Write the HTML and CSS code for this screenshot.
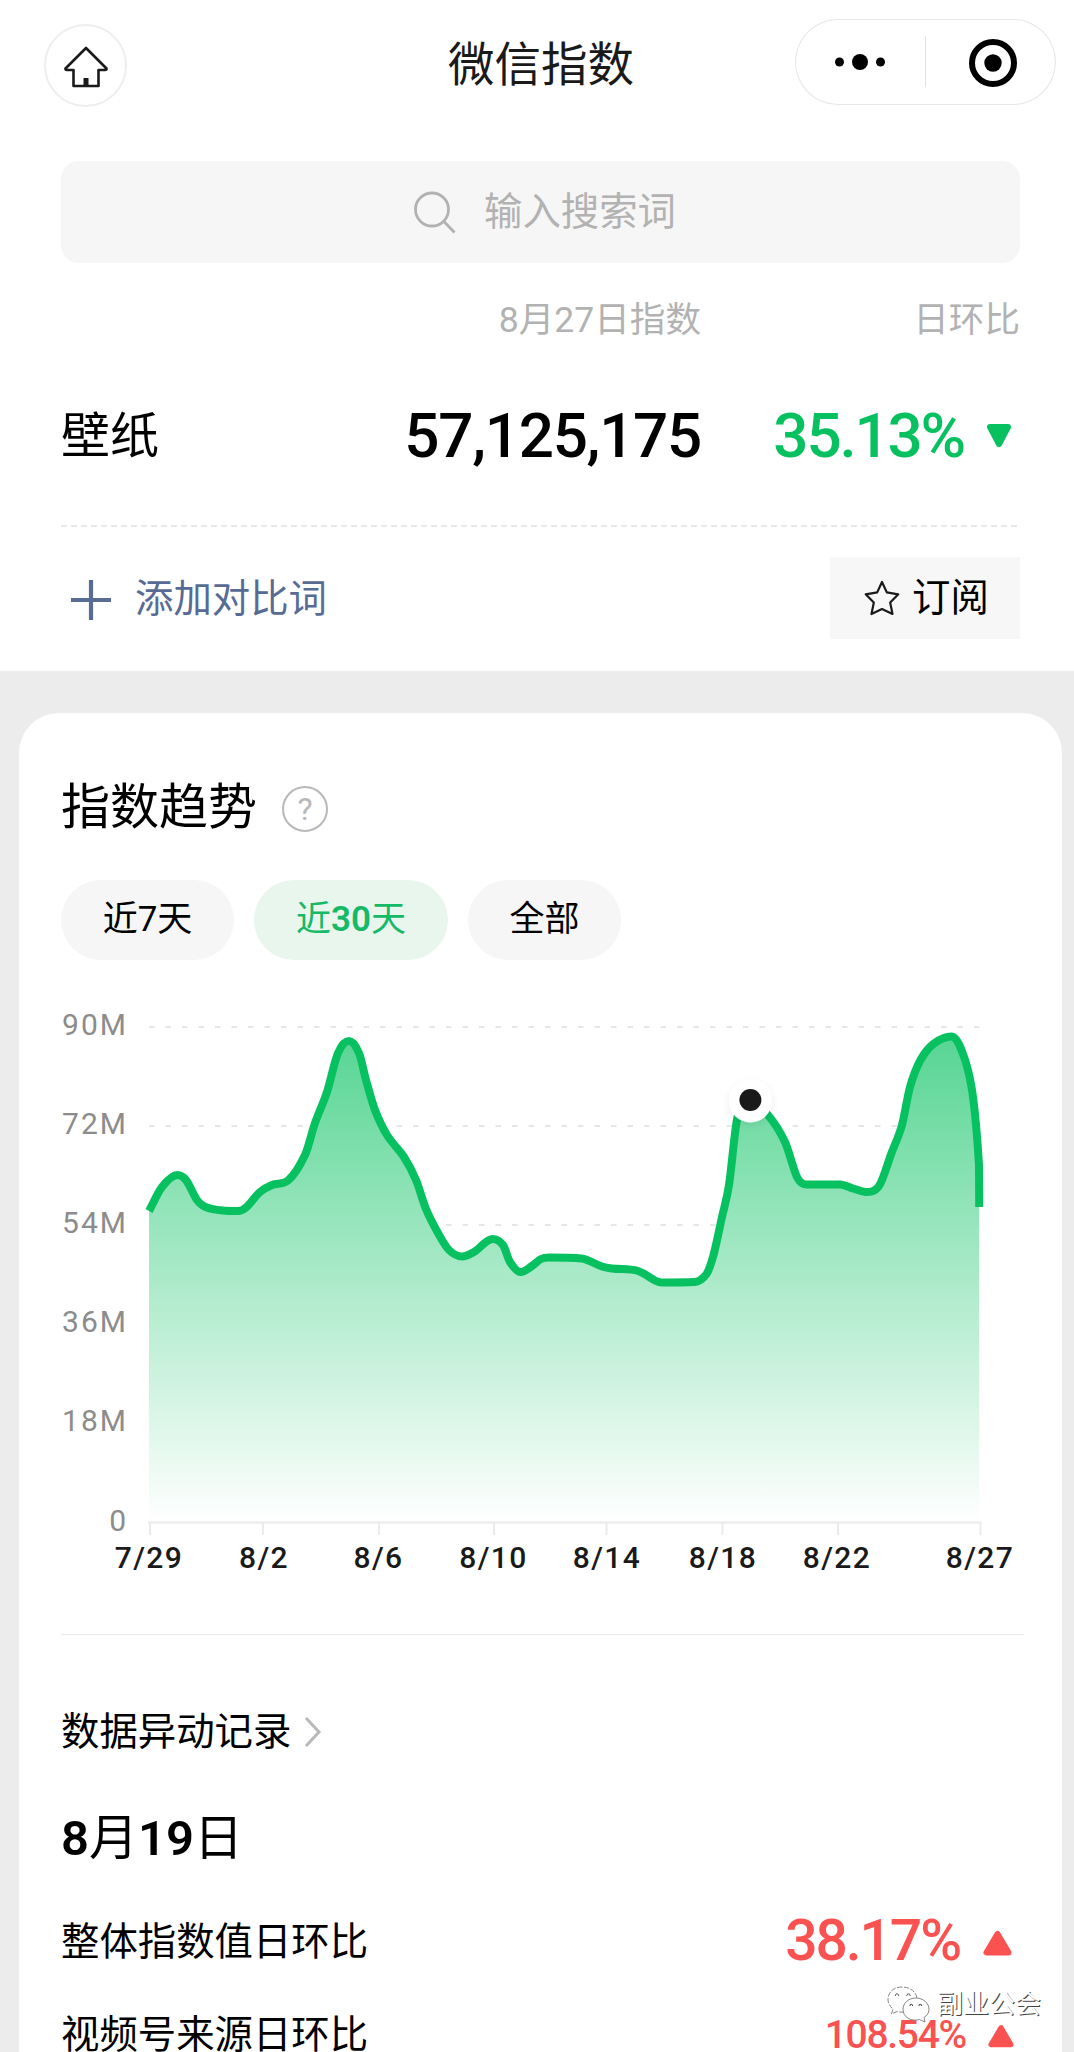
FILE: index.html
```html
<!DOCTYPE html>
<html lang="zh-CN">
<head>
  <meta charset="UTF-8">
  <title>微信指数</title>
  <meta name="viewport" content="width=device-width, initial-scale=1">
  <link rel="stylesheet" href="styles.css">
</head>
<body>

<header class="nav">
  <div class="home">
    <svg width="46" height="42" viewBox="0 0 46 42" fill="none" stroke="#1a1a1a" stroke-width="2.6" stroke-linejoin="round">
      <path d="M23 2 L2.5 22.5 Q2 24 4 24 H10.5 V40 H35.5 V24 H42 Q44 24 43.5 22.5 Z"/>
      <path d="M23 40 V32" stroke-width="5"/>
    </svg>
  </div>
  <h1>微信指数</h1>
  <div class="capsule">
    <svg width="261" height="86" viewBox="0 0 261 86">
      <circle cx="44.5" cy="43" r="4.5"/>
      <circle cx="65" cy="43" r="8"/>
      <circle cx="85.5" cy="43" r="4.5"/>
      <path d="M130.5 17 V68" stroke="#e2e2e2"/>
      <circle cx="198" cy="44" r="21" fill="none" stroke="#000" stroke-width="6"/>
      <circle cx="198" cy="44" r="8.7"/>
    </svg>
  </div>
</header>

<main>
  <section class="summary">
    <div class="search">
      <svg width="44" height="44" viewBox="0 0 44 44" fill="none" stroke="#b2b2b2" stroke-width="2.8">
        <circle cx="19" cy="19.5" r="16.5"/>
        <path d="M30.5 31 L41.5 42.5"/>
      </svg>
      <span>输入搜索词</span>
    </div>

    <div class="labels">
      <span class="col-index">8月27日指数</span>
      <span class="col-rate">日环比</span>
    </div>
    <div class="values">
      <span class="word">壁纸</span>
      <span class="col-index number">57,125,175</span>
      <span class="col-rate rate-down">
        <span class="percent">35.13%</span>
        <svg width="26" height="24" viewBox="0 0 26 24"><path d="M4 3 H22 L13 20 Z" fill="#07c160" stroke="#07c160" stroke-width="6" stroke-linejoin="round"/></svg>
      </span>
    </div>

    <svg class="dash" width="960" height="2"><path d="M0 1 H960" stroke="#e8e8e8" stroke-width="2" stroke-dasharray="6 4"/></svg>

    <div class="actions">
      <div class="add">
        <svg width="40" height="40" viewBox="0 0 40 40" stroke="#576b95" stroke-width="4.2"><path d="M20 0 V40 M0 20 H40"/></svg>
        <span>添加对比词</span>
      </div>
      <div class="subscribe">
        <svg width="36" height="36" viewBox="0 0 36 36" fill="none" stroke="#1a1a1a" stroke-width="2.2" stroke-linejoin="round">
          <path d="M18 2 L22.8 12.4 L34.3 14.3 L26.2 22.6 L28.5 34 L18 29 L7.5 34 L9.8 22.6 L1.7 14.3 L13.2 12.4 Z"/>
        </svg>
        <span>订阅</span>
      </div>
    </div>
  </section>

  <section class="card">
    <div class="card-title">
      <h2>指数趋势</h2>
      <span class="help">?</span>
    </div>

    <div class="tabs">
      <span class="tab tab-7">近7天</span>
      <span class="tab tab-30 active">近<b>30</b>天</span>
      <span class="tab tab-all">全部</span>
    </div>

    <svg class="chart" width="1043" height="674" viewBox="19 960 1043 674">
      <defs>
        <linearGradient id="area" gradientUnits="userSpaceOnUse" x1="0" y1="1035" x2="0" y2="1522">
          <stop offset="0" stop-color="#07c160" stop-opacity="0.68"/>
          <stop offset="1" stop-color="#07c160" stop-opacity="0"/>
        </linearGradient>
        <filter id="dotShadow" x="-50%" y="-50%" width="200%" height="200%">
          <feDropShadow dx="0" dy="3" stdDeviation="4" flood-opacity="0.07"/>
        </filter>
      </defs>
      <g class="grid">
        <path d="M149 1027 H980"/>
        <path d="M149 1126 H980"/>
        <path d="M149 1225 H980"/>
      </g>
      <g class="y-label">
        <text x="128" y="1035">90M</text>
        <text x="128" y="1134">72M</text>
        <text x="128" y="1233">54M</text>
        <text x="128" y="1332">36M</text>
        <text x="128" y="1431">18M</text>
        <text x="128" y="1530.5">0</text>
      </g>
      <path id="areaPath" fill="#fff"/>
      <path id="fillPath" fill="url(#area)"/>
      <path class="axis" d="M148 1522.5 H981 M150 1522 V1535 M263 1522 V1535 M379 1522 V1535 M494 1522 V1535 M606.5 1522 V1535 M722.5 1522 V1535 M838 1522 V1535 M980.5 1522 V1535"/>
      <path id="linePath" fill="none" stroke="#07c160" stroke-width="8"/>
      <circle cx="750.4" cy="1101" r="21.5" fill="#fff" filter="url(#dotShadow)"/>
      <circle cx="750.4" cy="1100" r="11" fill="#1a1a1a"/>
      <g class="x-label">
        <text x="149" y="1568">7/29</text>
        <text x="264" y="1568">8/2</text>
        <text x="378.5" y="1568">8/6</text>
        <text x="493.5" y="1568">8/10</text>
        <text x="607" y="1568">8/14</text>
        <text x="723" y="1568">8/18</text>
        <text x="837" y="1568">8/22</text>
        <text x="980" y="1568">8/27</text>
      </g>
    </svg>

    <div class="records">
      <div class="records-link">
        <span>数据异动记录</span>
        <svg width="18" height="32" viewBox="0 0 18 32" fill="none" stroke="#b8b8b8" stroke-width="3"><path d="M2 2 L15 16 L2 30"/></svg>
      </div>
      <h3><b>8</b>月<b>19</b>日</h3>
      <div class="record">
        <span>整体指数值日环比</span>
        <span class="rate-up large">
          <span class="percent">38.17%</span>
          <svg width="29" height="26" viewBox="0 0 29 26"><path d="M3.5 22.5 H25.5 L14.5 4 Z"/></svg>
        </span>
      </div>
      <div class="record">
        <span>视频号来源日环比</span>
        <span class="rate-up small">
          <span class="percent">108.54%</span>
          <svg width="26" height="24" viewBox="0 0 29 26"><path d="M3.5 22.5 H25.5 L14.5 4 Z"/></svg>
        </span>
      </div>
    </div>
  </section>
</main>

<div class="watermark">
  <svg width="43" height="37" viewBox="0 0 43 37" fill="#fff" stroke="#777" stroke-width="0.9">
    <path d="M15 1 C7 1 1 6 1 13.5 C1 18 3.5 21 6 23 L4.5 28 L10 25.5 C19 28 30 23 30 13.5 C30 6 23 1 15 1 Z" stroke-dasharray="5 1.5"/>
    <path d="M29 12 C21.5 12 16 17 16 23.5 C16 31 24 36 32.5 33.5 L38 36 L37 31.5 C40 29.5 42 27 42 23.5 C42 17 36 12 29 12 Z"/>
    <path d="M8.5 10 a1.6 1.6 0 1 1 3 0 M20 10 a1.6 1.6 0 1 1 3 0 M23 20 a1.3 1.3 0 1 1 2.5 0 M32 20 a1.3 1.3 0 1 1 2.5 0" stroke="#333"/>
  </svg>
  <span>副业公会</span>
</div>

<script>
  const points = [
    [149,1211],[162,1187],[177.4,1175],[186,1180],[197,1200],[205.5,1207],[222.6,1210.5],[238,1211],[246,1207.5],
    [260,1192],[272,1185],[288,1180.5],[305,1155],[315,1123],[327,1092],[338,1053],[349,1041],[359,1053],
    [366,1080],[375,1110],[387,1135],[404,1157],[416,1180],[426,1209],[438,1233],[449,1250],[462,1256.5],[474,1252],
    [492.5,1239],[503,1245],[510,1262],[520.5,1272],[532,1266],[541,1259],[549,1257.5],[581.5,1258.5],
    [602,1266.5],[612,1268.5],[638,1271],[656,1281],[662,1282.5],[694.5,1282],[706.5,1274],[713.5,1255],[722,1217],
    [729,1185],[737.5,1117],[750,1100],[768,1115],[785,1142],[797,1177],[806,1184.5],[840,1184.5],[853,1188.5],[866,1192],
    [879,1186],[891.5,1153],[902,1125],[910,1087],[920.5,1060],[934,1043.5],[951.5,1036.5],[961.5,1050],[972,1090],
    [979,1165],[979.2,1207]
  ];

  // 三次插值，极值点处切线水平
  function smooth(p) {
    const n = p.length;
    const s = [];
    for (let i = 0; i < n - 1; i++) {
      s.push((p[i + 1][1] - p[i][1]) / (p[i + 1][0] - p[i][0]));
    }
    const m = [s[0]];
    for (let i = 1; i < n - 1; i++) {
      const t = (p[i + 1][1] - p[i - 1][1]) / (p[i + 1][0] - p[i - 1][0]);
      const limit = 3 * Math.min(Math.abs(s[i - 1]), Math.abs(s[i]));
      m.push(s[i - 1] * s[i] <= 0 ? 0 : Math.sign(t) * Math.min(Math.abs(t), limit));
    }
    m.push(s[n - 2]);
    let d = `M${p[0]}`;
    for (let i = 0; i < n - 1; i++) {
      const h = (p[i + 1][0] - p[i][0]) / 3;
      d += ` C${p[i][0] + h},${p[i][1] + m[i] * h} ${p[i + 1][0] - h},${p[i + 1][1] - m[i + 1] * h} ${p[i + 1]}`;
    }
    return d;
  }

  const line = smooth(points);
  const area = line + " V1522 H149 Z";
  document.getElementById("linePath").setAttribute("d", line);
  document.getElementById("areaPath").setAttribute("d", area);
  document.getElementById("fillPath").setAttribute("d", area);
</script>

</body>
</html>
```
FILE: styles.css
```css
* {
  box-sizing: border-box;
}
body {
  margin: 0;
  height: 2052px;
  overflow: hidden;
  position: relative;
  background-color: #ececec;
  color: #000;
  font-family: Roboto, "Noto Sans CJK SC", sans-serif;
  font-size: 38.4px;
  line-height: 1;
}
h1, h2, h3 {
  margin: 0;
  font-weight: 400;
}
svg {
  display: block;
  flex: none;
}
.nav {
  display: grid;
  grid-template-columns: 261px 1fr 261px;
  align-items: center;
  height: 130px;
  padding: 0 18px 0 44px;
  background-color: #fff;
}
.home {
  display: flex;
  justify-content: center;
  align-items: center;
  width: 83px;
  height: 83px;
  padding-top: 4px;
  border: 2px solid #eee;
  border-radius: 50%;
}
.nav h1 {
  padding-right: 18px;
  text-align: center;
  color: #1a1a1a;
  font-size: 46.5px;
  line-height: 60px;
}
.capsule {
  width: 261px;
  height: 86px;
  margin-bottom: 6px;
  border-radius: 43px;
  box-shadow: inset 0 0 0 1px #e6e6e6;
}
.summary {
  height: 541px;
  padding: 31px 54px 0 61px;
  background-color: #fff;
}
.search {
  display: flex;
  justify-content: center;
  align-items: center;
  gap: 27px;
  height: 102px;
  padding-left: 8px;
  border-radius: 18px;
  background-color: #f6f6f6;
  color: #b2b2b2;
}
.labels, .values {
  display: grid;
  grid-template-columns: 240px 400px 1fr;
  align-items: center;
}
.labels {
  height: 52px;
  margin-top: 32px;
  color: #b2b2b2;
  font-size: 35.6px;
}
.values {
  height: 178px;
}
.word {
  font-size: 49px;
}
.col-index {
  grid-column: 2;
  text-align: right;
}
.col-rate {
  grid-column: 3;
  text-align: right;
}
.number, .percent {
  font-weight: 500;
}
.number {
  font-size: 62px;
  letter-spacing: -1.3px;
}
.rate-down {
  display: flex;
  justify-content: flex-end;
  align-items: center;
  gap: 22px;
  padding-right: 8px;
  color: #07c160;
  font-size: 62px;
  letter-spacing: -2.2px;
}
.actions {
  display: flex;
  justify-content: space-between;
  align-items: center;
  height: 145px;
}
.add {
  display: flex;
  align-items: center;
  gap: 24px;
  padding-left: 10px;
  color: #576b95;
}
.subscribe {
  display: flex;
  justify-content: center;
  align-items: center;
  gap: 12px;
  width: 190px;
  height: 82px;
  margin-bottom: 3px;
  padding-left: 3px;
  background-color: #f7f7f7;
}
.card {
  height: 1400px;
  margin: 42px 12px 0 19px;
  padding: 62px 38px 0 42px;
  border-radius: 40px 40px 0 0;
  background-color: #fff;
}
.card-title {
  display: flex;
  align-items: center;
  gap: 25px;
  height: 64px;
}
.card-title h2 {
  font-size: 49px;
}
.help {
  display: flex;
  justify-content: center;
  align-items: center;
  width: 46px;
  height: 46px;
  margin-top: 4px;
  border: 2px solid #b8b8b8;
  border-radius: 50%;
  color: #b8b8b8;
  font-size: 32px;
}
.tabs {
  display: flex;
  gap: 20px;
  margin-top: 41px;
}
.tab {
  height: 80px;
  border-radius: 40px;
  background-color: #f6f6f6;
  font-size: 35px;
  line-height: 80px;
  text-align: center;
}
.tab-7 {
  width: 173px;
}
.tab-30 {
  width: 194px;
}
.tab-all {
  width: 153px;
}
.tab b {
  font-weight: 600;
}
.active {
  background-color: #e8f6ee;
  color: #16b966;
}
.chart {
  margin-left: -42px;
}
.grid path {
  stroke: #dedede;
  stroke-width: 1.6;
  stroke-dasharray: 5.5 11;
}
.y-label text {
  fill: #8c8c8c;
  font-size: 30px;
  letter-spacing: 2px;
  text-anchor: end;
}
.x-label text {
  fill: #1a1a1a;
  font-size: 30px;
  font-weight: 500;
  letter-spacing: 1.4px;
  text-anchor: middle;
}
.axis {
  fill: none;
  stroke: #ebebeb;
  stroke-width: 2;
}
.records {
  border-top: 1px solid #ebebeb;
}
.records-link {
  display: flex;
  align-items: center;
  gap: 13px;
  height: 60px;
  margin-top: 67px;
}
.records h3 {
  height: 60px;
  margin-top: 47px;
  font-size: 49px;
  line-height: 60px;
}
.records h3 b {
  font-weight: 600;
}
.record {
  display: flex;
  justify-content: space-between;
  align-items: center;
  height: 93px;
  margin-right: 12px;
}
h3 + .record {
  margin-top: 27px;
}
.rate-up {
  display: flex;
  align-items: center;
  color: #fa5151;
}
.rate-up path {
  fill: #fa5151;
  stroke: #fa5151;
  stroke-width: 6;
  stroke-linejoin: round;
}
.large {
  gap: 23px;
  font-size: 57px;
  letter-spacing: -2.1px;
}
.small {
  gap: 22px;
  margin-right: -2px;
  font-size: 39px;
  letter-spacing: -1.3px;
}
.large .percent {
  margin-top: -4px;
}
.watermark {
  position: absolute;
  top: 1986px;
  left: 887px;
  display: flex;
  align-items: center;
  gap: 7px;
  color: #fff;
  font-size: 26px;
  line-height: 37px;
  text-shadow: 1px 1px 0 #444;
}
```
